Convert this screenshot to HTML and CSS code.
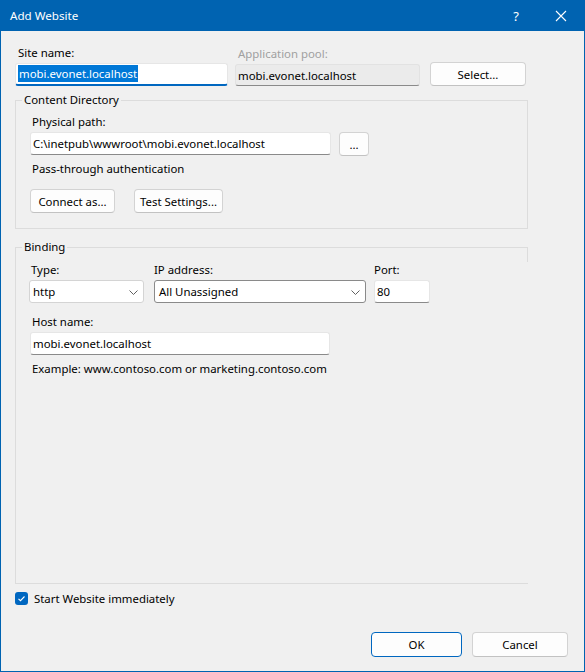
FILE: index.html
```html
<!DOCTYPE html>
<html lang="en">
<head>
  <meta charset="UTF-8">
  <meta name="viewport" content="width=device-width, initial-scale=1.0">
  <title>Add Website</title>
  <link rel="stylesheet" href="styles.css">
</head>
<body>
  <div class="window">
    <!-- 标题栏 -->
    <div class="titlebar">
      <span class="title">Add Website</span>
      <span class="help">?</span>
      <span class="close">
        <svg width="12" height="12" viewBox="0 0 12 12"><path d="M1 1 L11 11 M11 1 L1 11" stroke="#fff" stroke-width="1.1" fill="none"/></svg>
      </span>
    </div>

    <div class="content">
      <!-- 站点名称 / 应用池 -->
      <div class="top-row">
        <div class="field site">
          <label>Site name:</label>
          <div class="input focused"><span class="selected">mobi.evonet.localhost</span></div>
        </div>
        <div class="field pool">
          <label class="disabled">Application pool:</label>
          <div class="input readonly">mobi.evonet.localhost</div>
        </div>
        <button class="btn select-btn">Select...</button>
      </div>

      <!-- 内容目录 -->
      <fieldset class="group content-dir">
        <legend>Content Directory</legend>
        <label>Physical path:</label>
        <div class="path-row">
          <div class="input path">C:\inetpub\wwwroot\mobi.evonet.localhost</div>
          <button class="btn browse">...</button>
        </div>
        <div class="auth">Pass-through authentication</div>
        <div class="btn-row">
          <button class="btn connect">Connect as...</button>
          <button class="btn test">Test Settings...</button>
        </div>
      </fieldset>

      <!-- 绑定 -->
      <fieldset class="group binding">
        <legend>Binding</legend>
        <div class="binding-row">
          <div class="field type">
            <label>Type:</label>
            <div class="combo light">http <svg class="chev" width="9" height="5" viewBox="0 0 9 5"><polyline points="0.5,0.5 4.5,4.5 8.5,0.5" stroke="#606060" fill="none"/></svg></div>
          </div>
          <div class="field ip">
            <label>IP address:</label>
            <div class="combo dark">All Unassigned <svg class="chev" width="9" height="5" viewBox="0 0 9 5"><polyline points="0.5,0.5 4.5,4.5 8.5,0.5" stroke="#606060" fill="none"/></svg></div>
          </div>
          <div class="field port">
            <label>Port:</label>
            <div class="input">80</div>
          </div>
        </div>
        <label class="host-label">Host name:</label>
        <div class="input host">mobi.evonet.localhost</div>
        <div class="example">Example: www.contoso.com or marketing.contoso.com</div>
      </fieldset>

      <div class="check-row">
        <span class="checkbox">
          <svg width="13" height="13" viewBox="0 0 13 13"><polyline points="3.5,6.8 5.5,8.7 9.5,4.5" stroke="#fff" stroke-width="1.1" fill="none"/></svg>
        </span>
        <span>Start Website immediately</span>
      </div>

      <div class="dialog-buttons">
        <button class="btn ok">OK</button>
        <button class="btn cancel">Cancel</button>
      </div>
    </div>
  </div>
</body>
</html>
```

FILE: styles.css
```css
/* 基础样式 */
* {
  box-sizing: border-box;
}
body {
  margin: 0;
  padding: 0;
  font-family: "Noto Sans", "Open Sans", sans-serif;
  font-size: 11.4px;
  color: #000;
  background: #f0f0f0;
}
.window {
  width: 585px;
  height: 672px;
  border: 1px solid #0063b1;
  border-top: none;
  background: #f0f0f0;
  display: flex;
  flex-direction: column;
}
/* 标题栏 */
.titlebar {
  height: 31px;
  margin: 0 -1px;
  background: #0063b1;
  color: #fff;
  display: flex;
  align-items: center;
  padding-left: 10px;
}
.title {
  flex: 1;
  font-size: 11.6px;
}
.help {
  width: 12px;
  text-align: center;
  font-size: 13px;
  margin-right: 33px;
}
.close {
  display: flex;
  width: 12px;
  margin-right: 18px;
}
.content {
  flex: 1;
  display: flex;
  flex-direction: column;
  padding: 14px 16px 14px 14px;
}
label, .auth, .example {
  display: block;
  height: 16px;
  line-height: 16px;
  padding-left: 2px;
}
.site label {
  padding-left: 3px;
}
label.disabled {
  color: #a0a0a0;
  padding-left: 3px;
}
.field label {
  margin-bottom: 2px;
}
.ip label, .port label {
  padding-left: 0;
}
/* 输入框 */
.input {
  height: 23px;
  line-height: 21px;
  background: #fff;
  border: 1px solid #e6e6e6;
  border-bottom-color: #8a8a8a;
  border-radius: 3px;
  padding: 0 2px;
  white-space: nowrap;
  overflow: hidden;
}
.input.focused {
  border-bottom: 2px solid #0067c0;
  padding: 0 2px;
  line-height: 20px;
}
.selected {
  background: #0078d7;
  color: #fff;
  padding: 1px 1px;
}
.input.readonly {
  background: #ebebeb;
  border-color: #e2e2e2;
  border-bottom-color: #8a8a8a;
  height: 22px;
  margin-top: 1px;
}
.top-row {
  display: flex;
  align-items: flex-end;
}
.site {
  width: 213px;
}
.pool {
  width: 185px;
  margin-left: 7px;
}
/* 按钮 */
.btn {
  font-family: inherit;
  font-size: 11.4px;
  color: #000;
  height: 24px;
  background: #fdfdfd;
  border: 1px solid #d3d3d3;
  border-bottom-color: #c2c2c2;
  border-radius: 4px;
  padding: 0;
}
.select-btn {
  width: 96px;
  margin-left: 10px;
}
/* 分组 */
.group {
  width: 513px;
  margin: 0;
  border: 1px solid #dcdcdc;
  padding: 6px 14px 15px 14px;
}
.group legend {
  margin-left: -8px;
  padding: 0 2px;
  line-height: 16px;
  height: 16px;
}
.content-dir {
  margin-top: 6px;
}
.content-dir label {
  margin-bottom: 2px;
}
.path-row {
  display: flex;
  gap: 8px;
}
.path {
  width: 301px;
}
.browse {
  width: 30px;
}
.auth {
  margin-top: 5px;
}
.btn-row {
  display: flex;
  gap: 19px;
  margin-top: 12px;
}
.connect {
  width: 85px;
}
.test {
  width: 89px;
}
.binding {
  position: relative;
  flex: 1;
  margin-top: 10px;
  border-right: none;
  padding-top: 7px;
}
.binding::after {
  content: "";
  position: absolute;
  right: 0;
  top: -8px;
  width: 1px;
  height: 15px;
  background: #dcdcdc;
}
.binding-row {
  display: flex;
}
.type {
  width: 115px;
  margin-left: -1px;
}
.ip {
  width: 212px;
  margin-left: 10px;
}
.port {
  width: 56px;
  margin-left: 8px;
}
.combo {
  position: relative;
  height: 23px;
  line-height: 21px;
  background: #fff;
  border: 1px solid #d4d4d4;
  border-radius: 3px;
  padding: 0 3px;
}
.combo.dark {
  border-color: #8a8a8a;
  padding: 0 4px;
}
.chev {
  position: absolute;
  right: 5px;
  top: 9px;
}
.host-label {
  margin-top: 11px;
  margin-bottom: 2px;
}
.host {
  width: 300px;
}
.example {
  margin-top: 6px;
}
/* 复选框 */
.check-row {
  display: flex;
  align-items: center;
  height: 16px;
  margin-top: 6px;
  gap: 6px;
}
.checkbox {
  display: flex;
  width: 13px;
  height: 13px;
  background: #0067c0;
  border-radius: 3px;
}
.dialog-buttons {
  display: flex;
  justify-content: flex-end;
  gap: 10px;
  margin-top: 26px;
}
.dialog-buttons .btn {
  height: 25px;
}
.ok {
  width: 91px;
  border-color: #0067c0;
}
.cancel {
  width: 96px;
}
```
